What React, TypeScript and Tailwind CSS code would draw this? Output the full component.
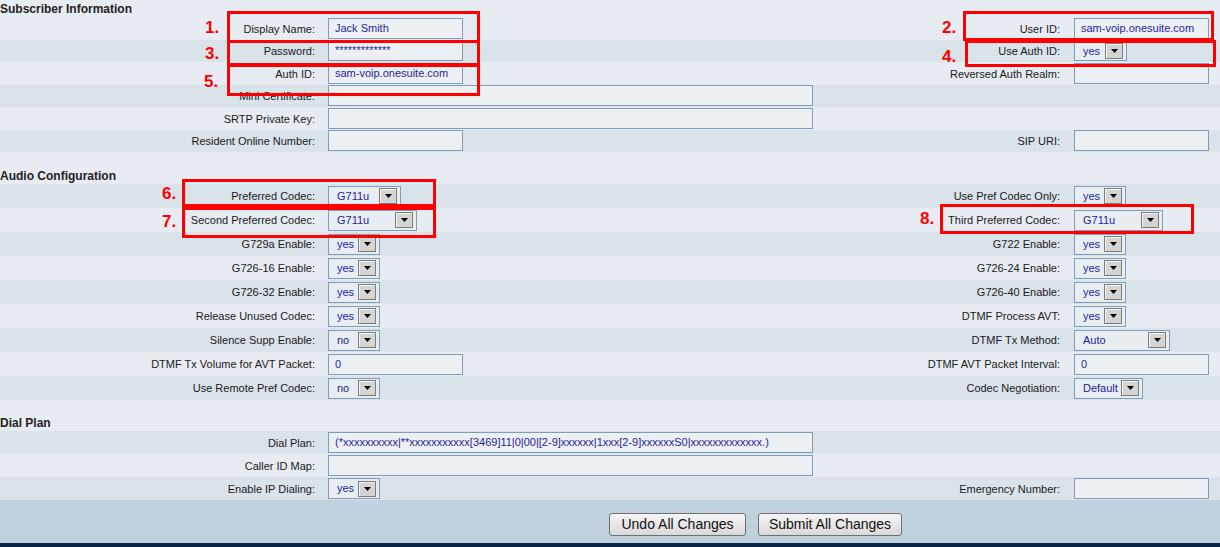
import React from 'react'

const FONT = "font-['Liberation_Sans',Arial,sans-serif]"

type Field = { kind: 'input' | 'select'; w: string; value?: string }

interface RowProps {
  h: string
  dark: boolean
  l?: string
  lf?: Field
  r?: string
  rf?: Field
}

function Arrow() {
  return (
    <span className="w-[18px] h-[16px] border border-[#7c7c7c] bg-[#d4d4d4] flex items-center justify-center shadow-[inset_1px_1px_0_#f4f4f4]">
      <svg width="7" height="4" viewBox="0 0 7 4">
        <path d="M0 0h7L3.5 4z" fill="#000" />
      </svg>
    </span>
  )
}

function FieldBox({ kind, w, value }: Field) {
  if (kind === 'select') {
    return (
      <div
        className={`${w} h-[21px] border border-[#7f9db9] bg-[#e8edf2] flex items-center justify-between pl-[8px] pr-[3px] text-[11px] text-[#1f1f99]`}
      >
        <span>{value}</span>
        <Arrow />
      </div>
    )
  }
  return (
    <div
      className={`${w} h-[21px] border border-[#7f9db9] bg-[#edf0f3] pl-[6px] text-[11px] leading-[19px] text-[#1f1f99] whitespace-nowrap overflow-hidden`}
    >
      {value}
    </div>
  )
}

function Row({ h, dark, l, lf, r, rf }: RowProps) {
  return (
    <div
      className={`grid grid-cols-[320px_508px_1fr_154px] items-center ${h} ${dark ? 'bg-[#dae2ea]' : 'bg-[#e7ecf2]'}`}
    >
      <div className="text-right pr-[5px] pt-[1px] whitespace-nowrap">{l && `${l}:`}</div>
      <div className="pl-[8px]">{lf && <FieldBox {...lf} />}</div>
      <div className="text-right pr-[6px] pt-[1px] whitespace-nowrap">{r && `${r}:`}</div>
      <div className="pl-[8px]">{rf && <FieldBox {...rf} />}</div>
    </div>
  )
}

function Header({ title, h }: { title: string; h: string }) {
  return (
    <div className={`${h} flex items-center text-[12px] font-bold text-[#222]`}>{title}</div>
  )
}

const inp = (w: string, value = ''): Field => ({ kind: 'input', w, value })
const sel = (w: string, value: string): Field => ({ kind: 'select', w, value })

const yes = sel('w-[52px]', 'yes')
const no = sel('w-[52px]', 'no')

const subscriber: Omit<RowProps, 'h' | 'dark'>[] = [
  { l: 'Display Name', lf: inp('w-[135px]', 'Jack Smith'), r: 'User ID', rf: inp('w-[135px]', 'sam-voip.onesuite.com') },
  { l: 'Password', lf: inp('w-[135px]', '*************'), r: 'Use Auth ID', rf: sel('w-[53px]', 'yes') },
  { l: 'Auth ID', lf: inp('w-[135px]', 'sam-voip.onesuite.com'), r: 'Reversed Auth Realm', rf: inp('w-[135px]') },
  { l: 'Mini Certificate', lf: inp('w-[485px]') },
  { l: 'SRTP Private Key', lf: inp('w-[485px]') },
  { l: 'Resident Online Number', lf: inp('w-[135px]'), r: 'SIP URI', rf: inp('w-[135px]') },
]

const audio: Omit<RowProps, 'h' | 'dark'>[] = [
  { l: 'Preferred Codec', lf: sel('w-[73px]', 'G711u'), r: 'Use Pref Codec Only', rf: yes },
  { l: 'Second Preferred Codec', lf: sel('w-[89px]', 'G711u'), r: 'Third Preferred Codec', rf: sel('w-[89px]', 'G711u') },
  { l: 'G729a Enable', lf: yes, r: 'G722 Enable', rf: yes },
  { l: 'G726-16 Enable', lf: yes, r: 'G726-24 Enable', rf: yes },
  { l: 'G726-32 Enable', lf: yes, r: 'G726-40 Enable', rf: yes },
  { l: 'Release Unused Codec', lf: yes, r: 'DTMF Process AVT', rf: yes },
  { l: 'Silence Supp Enable', lf: no, r: 'DTMF Tx Method', rf: sel('w-[96px]', 'Auto') },
  { l: 'DTMF Tx Volume for AVT Packet', lf: inp('w-[135px]', '0'), r: 'DTMF AVT Packet Interval', rf: inp('w-[135px]', '0') },
  { l: 'Use Remote Pref Codec', lf: no, r: 'Codec Negotiation', rf: sel('w-[69px]', 'Default') },
]

const dial: Omit<RowProps, 'h' | 'dark'>[] = [
  {
    l: 'Dial Plan',
    lf: inp('w-[485px]', '(*xxxxxxxxxx|**xxxxxxxxxxx[3469]11|0|00|[2-9]xxxxxx|1xxx[2-9]xxxxxxS0|xxxxxxxxxxxxx.)'),
  },
  { l: 'Caller ID Map', lf: inp('w-[485px]') },
  { l: 'Enable IP Dialing', lf: yes, r: 'Emergency Number', rf: inp('w-[135px]') },
]

// red annotation boxes drawn over the form
const boxes = [
  { n: '1.', box: 'left-[227px] top-[11px] w-[253px] h-[32px]', num: 'left-[205px] top-[18px]' },
  { n: '3.', box: 'left-[227px] top-[40px] w-[253px] h-[26px]', num: 'left-[205px] top-[44px]' },
  { n: '5.', box: 'left-[227px] top-[64px] w-[253px] h-[32px]', num: 'left-[204px] top-[72px]' },
  { n: '2.', box: 'left-[963px] top-[11px] w-[251px] h-[30px]', num: 'left-[942px] top-[18px]' },
  { n: '4.', box: 'left-[965px] top-[40px] w-[251px] h-[27px]', num: 'left-[942px] top-[47px]' },
  { n: '6.', box: 'left-[182px] top-[179px] w-[254px] h-[28px]', num: 'left-[162px] top-[184px]' },
  { n: '7.', box: 'left-[182px] top-[207px] w-[254px] h-[31px]', num: 'left-[162px] top-[212px]' },
  { n: '8.', box: 'left-[940px] top-[204px] w-[254px] h-[30px]', num: 'left-[920px] top-[209px]' },
]

export default function App() {
  return (
    <div className={`relative w-[1220px] h-[547px] overflow-hidden bg-[#e7ecf2] text-[11px] text-[#1a1a1a] ${FONT}`}>
      <Header title="Subscriber Information" h="h-[17px]" />
      {subscriber.map((r, i) => (
        <Row key={r.l} h="h-[22.5px]" dark={i % 2 === 1} {...r} />
      ))}
      <div className="h-[15px]" />
      <Header title="Audio Configuration" h="h-[17px]" />
      {audio.map((r, i) => (
        <Row key={r.l} h="h-[24px]" dark={i % 2 === 0} {...r} />
      ))}
      <div className="h-[15px]" />
      <Header title="Dial Plan" h="h-[16px]" />
      {dial.map((r, i) => (
        <Row key={r.l} h="h-[23px]" dark={i % 2 === 0} {...r} />
      ))}

      <div className="h-[43px] bg-[#bfd2de] flex items-start pt-[13px] pl-[609px] gap-[12px]">
        <button className="w-[137px] h-[23px] rounded-[3px] border border-[#707070] bg-gradient-to-b from-[#f6f6f6] to-[#d9d9d9] text-[14px] text-[#111]">
          Undo All Changes
        </button>
        <button className="w-[144px] h-[23px] rounded-[3px] border border-[#707070] bg-gradient-to-b from-[#f6f6f6] to-[#d9d9d9] text-[14px] text-[#111]">
          Submit All Changes
        </button>
      </div>
      <div className="h-[4px] bg-[#0b2443]" />

      {boxes.map((b) => (
        <React.Fragment key={b.n}>
          <div className={`absolute ${b.box} border-[3px] border-[#ff0000]`} />
          <div className={`absolute ${b.num} text-[17px] leading-[20px] font-bold text-[#ff0000]`}>{b.n}</div>
        </React.Fragment>
      ))}
    </div>
  )
}
